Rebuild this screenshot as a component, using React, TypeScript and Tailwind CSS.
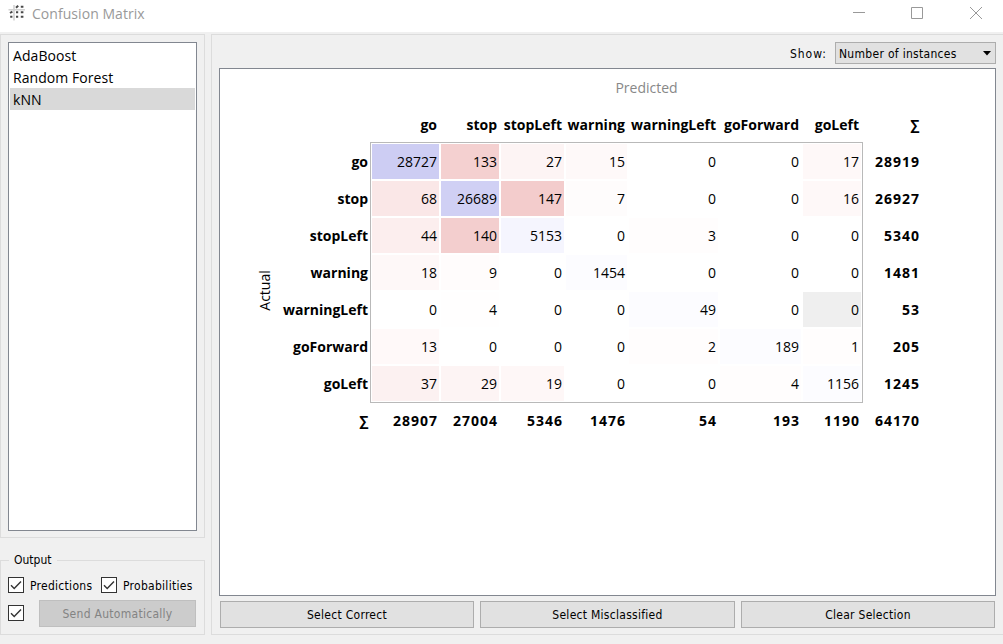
import React from "react";

const columns = ["go", "stop", "stopLeft", "warning", "warningLeft", "goForward", "goLeft"];

const matrix = [
  [28727, 133, 27, 15, 0, 0, 17],
  [68, 26689, 147, 7, 0, 0, 16],
  [44, 140, 5153, 0, 3, 0, 0],
  [18, 9, 0, 1454, 0, 0, 0],
  [0, 4, 0, 0, 49, 0, 0],
  [13, 0, 0, 0, 2, 189, 1],
  [37, 29, 19, 0, 0, 4, 1156],
];

const fills = [
  ["bg-[#cdcdf3]", "bg-[#f4d0d0]", "bg-[#fdf4f4]", "bg-[#fef9f9]", "", "", "bg-[#fef8f8]"],
  ["bg-[#fae7e7]", "bg-[#d0d0f4]", "bg-[#f3cccc]", "bg-[#fefcfc]", "", "", "bg-[#fef8f8]"],
  ["bg-[#fceeee]", "bg-[#f3cece]", "bg-[#f5f5fe]", "", "bg-[#fffdfd]", "", ""],
  ["bg-[#fef8f8]", "bg-[#fffcfc]", "", "bg-[#fcfcff]", "", "", ""],
  ["", "bg-[#fffefe]", "", "", "bg-[#fcfcff]", "", "bg-[#efefef]"],
  ["bg-[#fff9f9]", "", "", "", "bg-[#fffdfd]", "bg-[#fcfcff]", "bg-[#fffdfd]"],
  ["bg-[#fcf1f1]", "bg-[#fdf4f4]", "bg-[#fef7f7]", "", "", "bg-[#fffdfd]", "bg-[#fcfcff]"],
];

const rowTotals = [28919, 26927, 5340, 1481, 53, 205, 1245];
const columnTotals = [28907, 27004, 5346, 1476, 54, 193, 1190];

const tracks = "grid grid-cols-[67px_58px_63px_61px_89px_81px_58px] gap-x-[2px]";

function Check() {
  return (
    <span className="flex size-4 shrink-0 items-center justify-center border border-[#333] bg-white">
      <svg width="14" height="14" viewBox="0 0 14 14" fill="none" stroke="#333" strokeWidth="1.4">
        <path d="M2 7.2 5.2 10.4 12 3.4" />
      </svg>
    </span>
  );
}

function TitleBar() {
  return (
    <header className="flex h-8 shrink-0 items-start bg-white text-[#999]">
      <svg className="ml-2 mt-[5px]" width="17" height="17" viewBox="0 0 17 17">
        <path d="M0.5 4.8H17M6 0V15.5" stroke="#d2d2d2" strokeWidth="1.6" />
        <path
          d="M8 2.8 10.2 0.8M12.8 1.8h2.6M2 8 4.4 6.6M8 7.3h2.2M12.8 7.3h2.6M2.2 11.8h2.2M8 11.8h2.2M12.8 11.8h2.6"
          stroke="#484848"
          strokeWidth="2"
        />
      </svg>
      <span className="ml-[7px] mt-[3px] font-['Open_Sans',sans-serif] text-[14px] leading-[22px] tracking-[0.05px]">Confusion Matrix</span>
      <svg className="ml-auto mr-[20px] mt-[6px]" width="132" height="14" viewBox="0 0 132 14" fill="none" stroke="#999">
        <path d="M2 6.5H14M60.5 1.5h11v11h-11zM119 1 131 13M131 1 119 13" />
      </svg>
    </header>
  );
}

function Matrix() {
  return (
    <div className="ml-[38px] mt-[8px] w-[661px] font-['Open_Sans',sans-serif] text-[14px] tracking-normal text-black">
      <div className="ml-[112px] w-[491px] pl-[62px] text-center leading-[22px] text-[#888]">Predicted</div>
      <div className="flex">
        <div className="flex h-[304px] w-[12px] shrink-0 items-center justify-center pt-[78px]">
          <span className="-rotate-90">Actual</span>
        </div>
        <div className="w-[98px] shrink-0 pt-[45px] text-right font-bold leading-[35px]">
          {columns.map((name) => (
            <div key={name} className="mb-[2px] flex h-[35px] justify-end whitespace-nowrap">{name}</div>
          ))}
          <div className="h-[35px]">∑</div>
        </div>
        <div className="ml-[2px] w-[493px] shrink-0">
          <div className={`${tracks} h-[43px] px-[2px] pt-[8px] text-right font-bold leading-[35px]`}>
            {columns.map((name) => (
              <div key={name} className="flex justify-end whitespace-nowrap pr-[2px]">{name}</div>
            ))}
          </div>
          <div className={`${tracks} h-[261px] gap-y-[2px] border border-[#b9b9b9] p-px text-right leading-[35px]`}>
            {matrix.map((row, r) =>
              row.map((value, c) => (
                <div key={`${r}-${c}`} className={`h-[35px] pr-[2px] ${fills[r][c]}`}>{value}</div>
              )),
            )}
          </div>
          <div className={`${tracks} px-[2px] text-right font-bold leading-[35px] tracking-[1px]`}>
            {columnTotals.map((value) => (
              <div key={value} className="pr-px">{value}</div>
            ))}
          </div>
        </div>
        <div className="w-[57px] shrink-0 pt-[8px] text-right font-bold leading-[35px] tracking-[1px]">
          <div className="mb-[2px] h-[35px]">∑</div>
          {rowTotals.map((value) => (
            <div key={value} className="mb-[2px] h-[35px]">{value}</div>
          ))}
          <div className="h-[35px]">64170</div>
        </div>
      </div>
    </div>
  );
}

export default function App() {
  return (
    <div className="flex h-[644px] w-[1003px] flex-col overflow-hidden bg-[#f0f0f0] font-['DejaVu_Sans_Condensed','DejaVu_Sans',sans-serif] text-[12px] tracking-[0.28px] text-black">
      <TitleBar />
      <div className="flex flex-1 pt-[2px]">
        <aside className="flex w-[205px] shrink-0 flex-col">
          <div className="h-[504px] border border-[#dcdcdc] p-[7px]">
            <ul className="h-[489px] w-[189px] border border-[#828790] bg-white p-px font-['Open_Sans',sans-serif] text-[14px] leading-[22px] tracking-[0.06px]">
              <li className="h-[22px] pl-[3px] pt-px">AdaBoost</li>
              <li className="h-[22px] pl-[3px] pt-px">Random Forest</li>
              <li className="h-[22px] bg-[#d9d9d9] pl-[3px] pt-px">kNN</li>
            </ul>
          </div>
          <fieldset className="mt-[13px] h-[84px] border border-[#dcdcdc] px-[7px]">
            <legend className="ml-[1px] px-[5px] leading-[18px] tracking-normal">Output</legend>
            <div className="mt-[8px] flex h-4 items-center">
              <Check />
              <span className="ml-[6px] w-[71px] whitespace-nowrap pt-[2px]">Predictions</span>
              <Check />
              <span className="ml-[6px] whitespace-nowrap pt-[2px]">Probabilities</span>
            </div>
            <div className="mt-[7px] flex items-start">
              <div className="pt-[5px]">
                <Check />
              </div>
              <button className="ml-[15px] h-[27px] w-[157px] border border-[#bfbfbf] bg-[#ccc] pt-px text-[#838383]">Send Automatically</button>
            </div>
          </fieldset>
        </aside>
        <main className="ml-[6px] flex h-[601px] flex-1 flex-col border border-r-0 border-[#dcdcdc] pl-[7px] pr-[7px] pt-[7px]">
          <div className="flex h-[22px] items-center justify-end">
            <span className="mr-[8px] pt-[2px] tracking-[1px]">Show:</span>
            <div className="flex h-[22px] w-[161px] items-center justify-between border border-[#adadad] bg-[#e1e1e1] pl-[3px] pr-[4px]">
              <span className="whitespace-nowrap pt-[2px] tracking-[0.3px]">Number of instances</span>
              <svg width="8" height="5" viewBox="0 0 8 5"><path d="M0 0h8L4 4.5z" fill="#000" /></svg>
            </div>
          </div>
          <section className="mt-[4px] h-[528px] shrink-0 border border-[#828790] bg-white">
            <Matrix />
          </section>
          <div className="ml-px mr-px mt-[5px] grid h-[27px] grid-cols-[254px_255px_254px] justify-between">
            <button className="border border-[#adadad] bg-[#e1e1e1]">Select Correct</button>
            <button className="border border-[#adadad] bg-[#e1e1e1]">Select Misclassified</button>
            <button className="border border-[#adadad] bg-[#e1e1e1]">Clear Selection</button>
          </div>
        </main>
      </div>
    </div>
  );
}
